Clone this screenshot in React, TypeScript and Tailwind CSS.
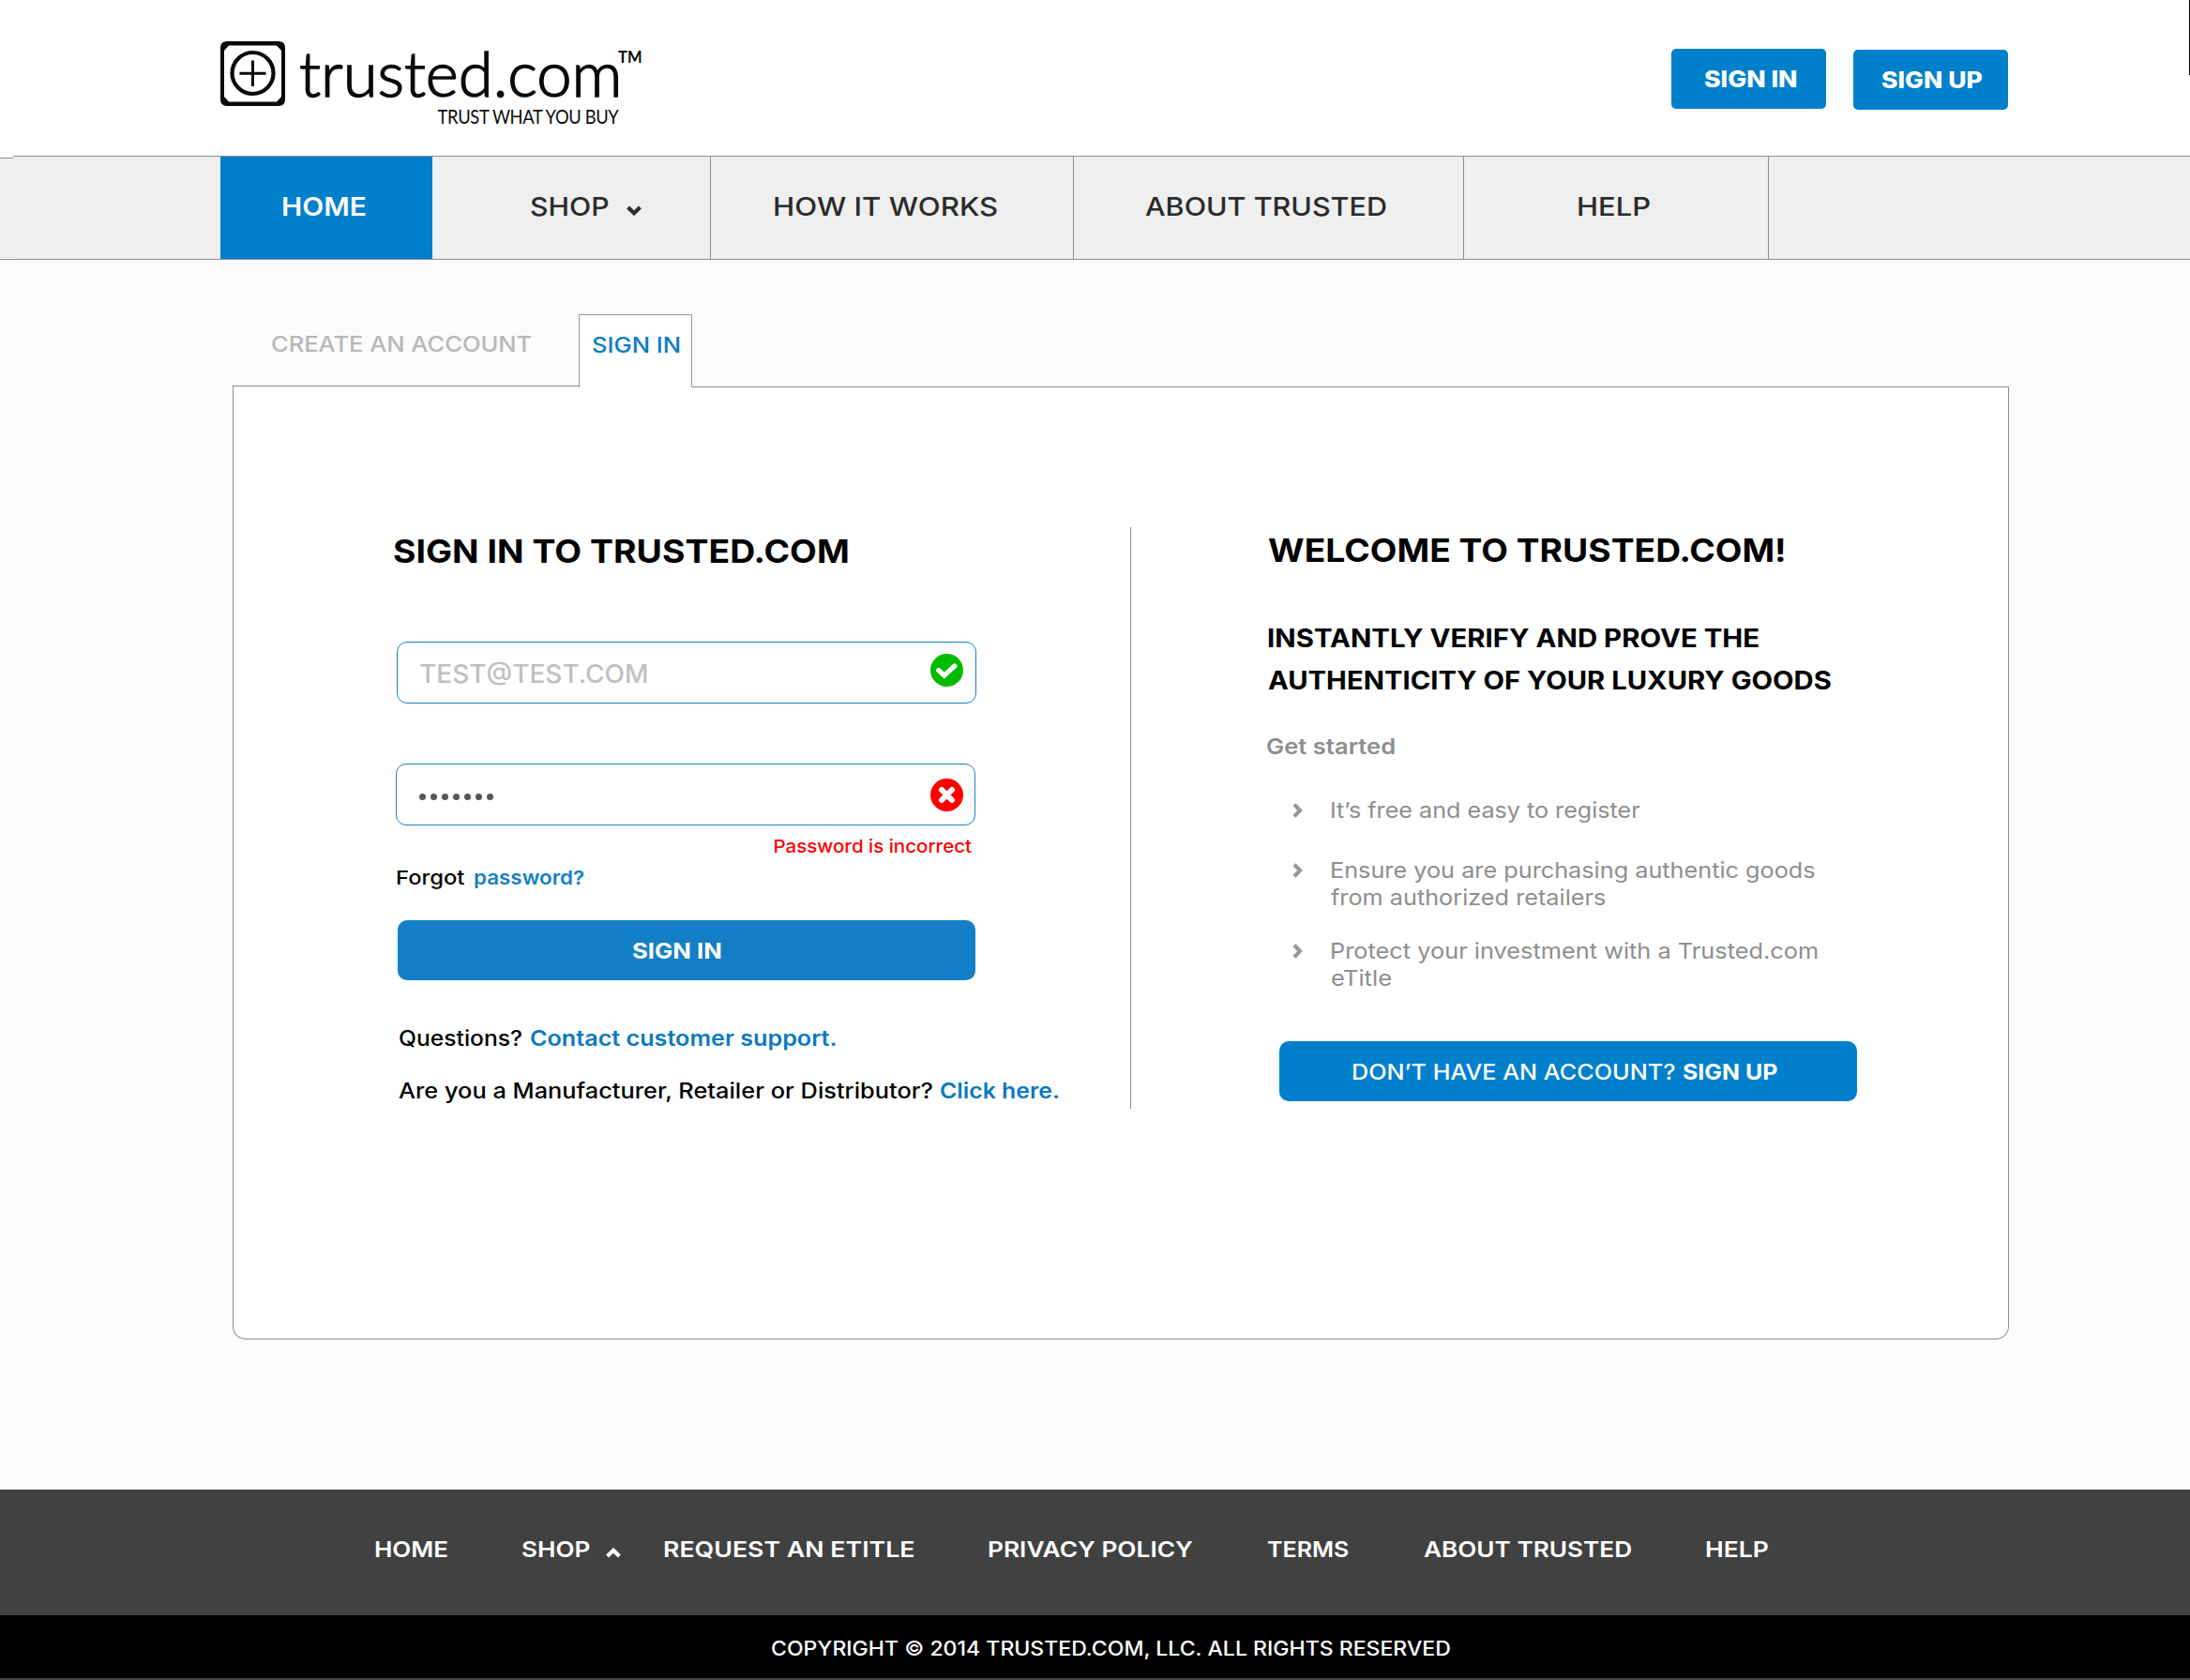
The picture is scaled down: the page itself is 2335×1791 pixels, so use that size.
import type { ReactNode } from "react";

type ChevronProps = { className: string };

function ChevronDown({ className }: ChevronProps) {
  return (
    <svg viewBox="0 0 16 11" className={className} fill="none" stroke="currentColor" strokeWidth="4.200">
      <path d="M1.6 2 L8 8.2 L14.4 2" />
    </svg>
  );
}

function ChevronUp({ className }: ChevronProps) {
  return (
    <svg viewBox="0 0 16 11" className={className} fill="none" stroke="currentColor" strokeWidth="4.200">
      <path d="M1.6 9 L8 2.8 L14.4 9" />
    </svg>
  );
}

function ChevronRight({ className }: ChevronProps) {
  return (
    <svg viewBox="0 0 11 16" className={className} fill="none" stroke="#999999" strokeWidth="4.200">
      <path d="M2 1.6 L8 8 L2 14.4" />
    </svg>
  );
}

/* A run of text widened horizontally to a broader letter shape. */
function Wide({ className, children }: { className: string; children: ReactNode }) {
  return <span className={`block w-fit origin-left whitespace-nowrap ${className}`}>{children}</span>;
}

function Logo() {
  return (
    <div className="flex h-[100px] items-start">
      <svg viewBox="0 0 69 69" className="h-[69px] w-[69px] shrink-0" fill="none">
        <path
          fill="#0a0a0a"
          fillRule="evenodd"
          d="M7 0 H62 Q69 0 69 7 V62 Q69 69 62 69 H7 Q0 69 0 62 V7 Q0 0 7 0 Z M9 4.500 L4 10 V59 L9 64.500 H60 L65 59 V10 L60 4.500 Z"
        />
        <circle cx="34.500" cy="34" r="22" stroke="#0a0a0a" strokeWidth="4.200" />
        <path d="M34.500 20.500 V48 M20.500 34.200 H48.500" stroke="#0a0a0a" strokeWidth="3" />
      </svg>
      <div className="ml-[15px] flex w-[340px] flex-col items-end font-['Lato',sans-serif] text-[#0a0a0a]">
        <div className="w-full whitespace-nowrap text-[67px] font-light leading-[66px] [-webkit-text-stroke:1.5px_#0a0a0a]">
          trusted.com
        </div>
        <div className="origin-right scale-x-[0.895] whitespace-nowrap text-[20.5px] leading-[28px] tracking-[-0.4px]">
          TRUST WHAT YOU BUY
        </div>
      </div>
      <div className="mt-[7px] font-['Lato',sans-serif] text-[16.5px] font-bold leading-[20px] text-[#0a0a0a]">TM</div>
    </div>
  );
}

function Header() {
  return (
    <header className="flex h-[166px] items-start justify-between bg-white pl-[235px]">
      <div className="pt-[44px]">
        <Logo />
      </div>
      <div className="flex items-start font-extrabold text-white">
        <button className="mt-[52px] h-[64px] w-[165px] rounded-[5px] bg-[#007fcb] pl-[35px] text-left text-[24px] leading-[65px]">
          <Wide className="scale-x-[1.11]">SIGN IN</Wide>
        </button>
        <button className="ml-[29px] mt-[53px] h-[64px] w-[165px] rounded-[5px] bg-[#007fcb] pl-[30px] text-left text-[24px] leading-[63px]">
          <Wide className="scale-x-[1.105]">SIGN UP</Wide>
        </button>
        <div className="ml-[193px] h-[80px] w-px bg-black" />
      </div>
    </header>
  );
}

function Nav() {
  return (
    <nav className="flex h-[111px] border-y border-[#8e8e8e] bg-[#efefef] text-[27.5px] font-medium leading-[107px] text-[#2b2b2b]">
      <div className="-mt-px h-[110px] w-[14px] bg-white pt-[2px]">
        <div className="h-[107px] border-t border-[#8e8e8e] bg-[#efefef]" />
      </div>
      <a className="ml-[221px] w-[226px] bg-[#007fcb] pl-[65px] font-semibold text-white">
        <Wide className="scale-x-[1.086]">HOME</Wide>
      </a>
      <a className="flex w-[297px] border-r border-[#8e8e8e] pl-[104px]">
        <span className="w-[103px]">
          <Wide className="scale-x-[1.1]">SHOP</Wide>
        </span>
        <ChevronDown className="mt-[52px] h-[11px] w-[16px]" />
      </a>
      <a className="w-[387px] border-r border-[#8e8e8e] pl-[66px]">
        <Wide className="scale-x-[1.135]">HOW IT WORKS</Wide>
      </a>
      <a className="w-[416px] border-r border-[#8e8e8e] pl-[76px]">
        <Wide className="scale-x-[1.109]">ABOUT TRUSTED</Wide>
      </a>
      <a className="w-[325px] border-r border-[#8e8e8e] pl-[120px]">
        <Wide className="scale-x-[1.124]">HELP</Wide>
      </a>
    </nav>
  );
}

function Tabs() {
  return (
    <div className="relative flex h-[77px] items-start text-[23px] font-medium leading-[65px]">
      <div className="h-[77px] w-[369px] border-b border-[#8e8e8e] pl-[40.5px] text-[#b8b8b8]">
        <Wide className="scale-x-[1.108]">CREATE AN ACCOUNT</Wide>
      </div>
      <div className="h-[78px] w-[121px] border-x border-t border-[#9a9a9a] bg-white pl-[13px] leading-[64px] text-[#0b7cc6]">
        <Wide className="scale-x-[1.113]">SIGN IN</Wide>
      </div>
      <div className="h-[78px] flex-1 border-b border-[#8e8e8e]" />
    </div>
  );
}

function SignInForm() {
  return (
    <section className="w-[956px] shrink-0 pl-[171px] pt-[156px]">
      <h1 className="-ml-px text-[34px] font-bold leading-[40px]">
        <Wide className="scale-x-[1.101]">SIGN IN TO TRUSTED.COM</Wide>
      </h1>
      <div className="ml-[3px] mt-[76px] flex h-[66px] w-[618px] items-start justify-between rounded-[11px] border border-[#1b80c4] bg-white pl-[23px] pr-[13px]">
        <span className="text-[27px] font-medium leading-[68px] text-[#c0c0c0]">
          <Wide className="scale-x-[1.038]">TEST@TEST.COM</Wide>
        </span>
        <svg viewBox="0 0 35 35" className="mt-[12px] h-[35px] w-[35px]" fill="none">
          <circle cx="17.500" cy="17.500" r="17.500" fill="#00bc00" />
          <path d="M8.800 17.600 L14.800 23.200 L25.800 13" stroke="#fff" strokeWidth="5.200" strokeLinecap="round" />
        </svg>
      </div>
      <div className="ml-[2px] mt-[64px] flex h-[66px] w-[618px] items-start justify-between rounded-[11px] border border-[#1b80c4] bg-white pl-[24px] pr-[12px]">
        <div className="mt-[31px] flex gap-[5px]">
          {[0, 1, 2, 3, 4, 5, 6].map((n) => (
            <span key={n} className="h-[7px] w-[7px] rounded-full bg-[#575757]" />
          ))}
        </div>
        <svg viewBox="0 0 35 35" className="mt-[15px] h-[35px] w-[35px]" fill="none">
          <circle cx="17.500" cy="17.500" r="17.500" fill="#fe0000" />
          <path
            d="M12 12 L23 23 M23 12 L12 23"
            stroke="#fff"
            strokeWidth="6"
            strokeLinecap="round"
          />
        </svg>
      </div>
      <p className="mt-[11px] flex w-[616px] justify-end text-[19px] font-medium leading-[24px] text-[#fe0000]">
        <span className="origin-right scale-x-[1.079] whitespace-nowrap">Password is incorrect</span>
      </p>
      <p className="mt-[7px] flex pl-[2px] text-[20.5px] font-medium leading-[28px]">
        <span className="w-[82.500px]">
          <Wide className="scale-x-[1.16]">Forgot</Wide>
        </span>
        <Wide className="scale-x-[1.092] font-semibold text-[#147fc6]">password?</Wide>
      </p>
      <button className="ml-[4px] mt-[31px] block h-[64px] w-[616px] rounded-[10px] bg-[#147fc6] pl-[250px] text-left text-[23px] font-bold leading-[66px] text-white">
        <Wide className="scale-x-[1.116]">SIGN IN</Wide>
      </button>
      <p className="mt-[47px] flex pl-[5px] text-[22.5px] font-medium leading-[30px]">
        <span className="w-[140px]">
          <Wide className="scale-x-[1.095]">Questions?</Wide>
        </span>
        <Wide className="scale-x-[1.118] font-semibold text-[#0a79c0]">Contact customer support.</Wide>
      </p>
      <p className="mt-[26px] flex pl-[5px] text-[22.5px] font-medium leading-[30px]">
        <span className="w-[577px]">
          <Wide className="scale-x-[1.127]">Are you a Manufacturer, Retailer or Distributor?</Wide>
        </span>
        <Wide className="scale-x-[1.103] font-semibold text-[#0a79c0]">Click here.</Wide>
      </p>
    </section>
  );
}

function Welcome() {
  return (
    <section className="flex-1 pl-[146px] pt-[155px]">
      <h2 className="text-[34px] font-bold leading-[40px]">
        <Wide className="scale-x-[1.095]">WELCOME TO TRUSTED.COM!</Wide>
      </h2>
      <p className="mt-[51px] text-[27px] font-bold leading-[45px]">
        <Wide className="-ml-px scale-x-[1.089]">INSTANTLY VERIFY AND PROVE THE</Wide>
        <Wide className="scale-x-[1.082]">AUTHENTICITY OF YOUR LUXURY GOODS</Wide>
      </p>
      <p className="-ml-[2px] mt-[33px] text-[23px] font-semibold leading-[30px] text-[#8e8e8e]">
        <Wide className="scale-x-[1.112]">Get started</Wide>
      </p>
      <ul className="pl-[26px] text-[23px] leading-[29px] text-[#8e8e8e]">
        <li className="mt-[39px] flex">
          <ChevronRight className="mt-[6px] h-[16px] w-[11px]" />
          <Wide className="ml-[29px] scale-x-[1.093]">It’s free and easy to register</Wide>
        </li>
        <li className="mt-[35px] flex">
          <ChevronRight className="mt-[6px] h-[16px] w-[11px]" />
          <span className="ml-[29px]">
            <Wide className="scale-x-[1.098]">Ensure you are purchasing authentic goods</Wide>
            <Wide className="ml-px scale-x-[1.098]">from authorized retailers</Wide>
          </span>
        </li>
        <li className="mt-[28px] flex">
          <ChevronRight className="mt-[6px] h-[16px] w-[11px]" />
          <span className="ml-[29px]">
            <Wide className="scale-x-[1.102]">Protect your investment with a Trusted.com</Wide>
            <Wide className="ml-px scale-x-[1.112]">eTitle</Wide>
          </span>
        </li>
      </ul>
      <button className="ml-[12px] mt-[52px] flex h-[64px] w-[616px] rounded-[10px] bg-[#007fcb] pl-[77px] text-left text-[23px] font-medium leading-[67px] text-white">
        <span className="w-[353px]">
          <Wide className="scale-x-[1.095]">DON’T HAVE AN ACCOUNT?</Wide>
        </span>
        <Wide className="scale-x-[1.084] font-bold">SIGN UP</Wide>
      </button>
    </section>
  );
}

function Footer() {
  return (
    <footer className="bg-[#414141] text-white">
      <div className="flex h-[134px] pl-[399px] pt-[49px] text-[23.5px] font-semibold leading-[30px]">
        <a className="w-[157px]">
          <Wide className="scale-x-[1.105]">HOME</Wide>
        </a>
        <a className="flex w-[151px]">
          <span className="w-[90px]">
            <Wide className="scale-x-[1.112]">SHOP</Wide>
          </span>
          <ChevronUp className="mt-[13px] h-[11px] w-[16px]" />
        </a>
        <a className="w-[346px]">
          <Wide className="scale-x-[1.137]">REQUEST AN ETITLE</Wide>
        </a>
        <a className="w-[298px]">
          <Wide className="scale-x-[1.119]">PRIVACY POLICY</Wide>
        </a>
        <a className="w-[167px]">
          <Wide className="scale-x-[1.065]">TERMS</Wide>
        </a>
        <a className="w-[300px]">
          <Wide className="scale-x-[1.113]">ABOUT TRUSTED</Wide>
        </a>
        <a>
          <Wide className="scale-x-[1.127]">HELP</Wide>
        </a>
      </div>
      <div className="h-[67px] bg-black pl-[822px] text-[21.5px] font-medium leading-[70px]">
        <Wide className="scale-x-[1.072]">COPYRIGHT © 2014 TRUSTED.COM, LLC. ALL RIGHTS RESERVED</Wide>
      </div>
      <div className="h-[2px]" />
    </footer>
  );
}

export default function App() {
  return (
    <div className="flex h-[1791px] w-[2335px] flex-col overflow-hidden bg-[#fbfbfb] font-['Inter',sans-serif] text-black">
      <Header />
      <Nav />
      <main className="ml-[248px] h-[1311px] w-[1894px] pt-[58px]">
        <Tabs />
        <div className="flex h-[1016px] rounded-b-[14px] border-x border-b border-[#8e8e8e] bg-white">
          <SignInForm />
          <div className="mt-[150px] h-[620px] w-px shrink-0 bg-[#8e8e8e]" />
          <Welcome />
        </div>
      </main>
      <Footer />
    </div>
  );
}
